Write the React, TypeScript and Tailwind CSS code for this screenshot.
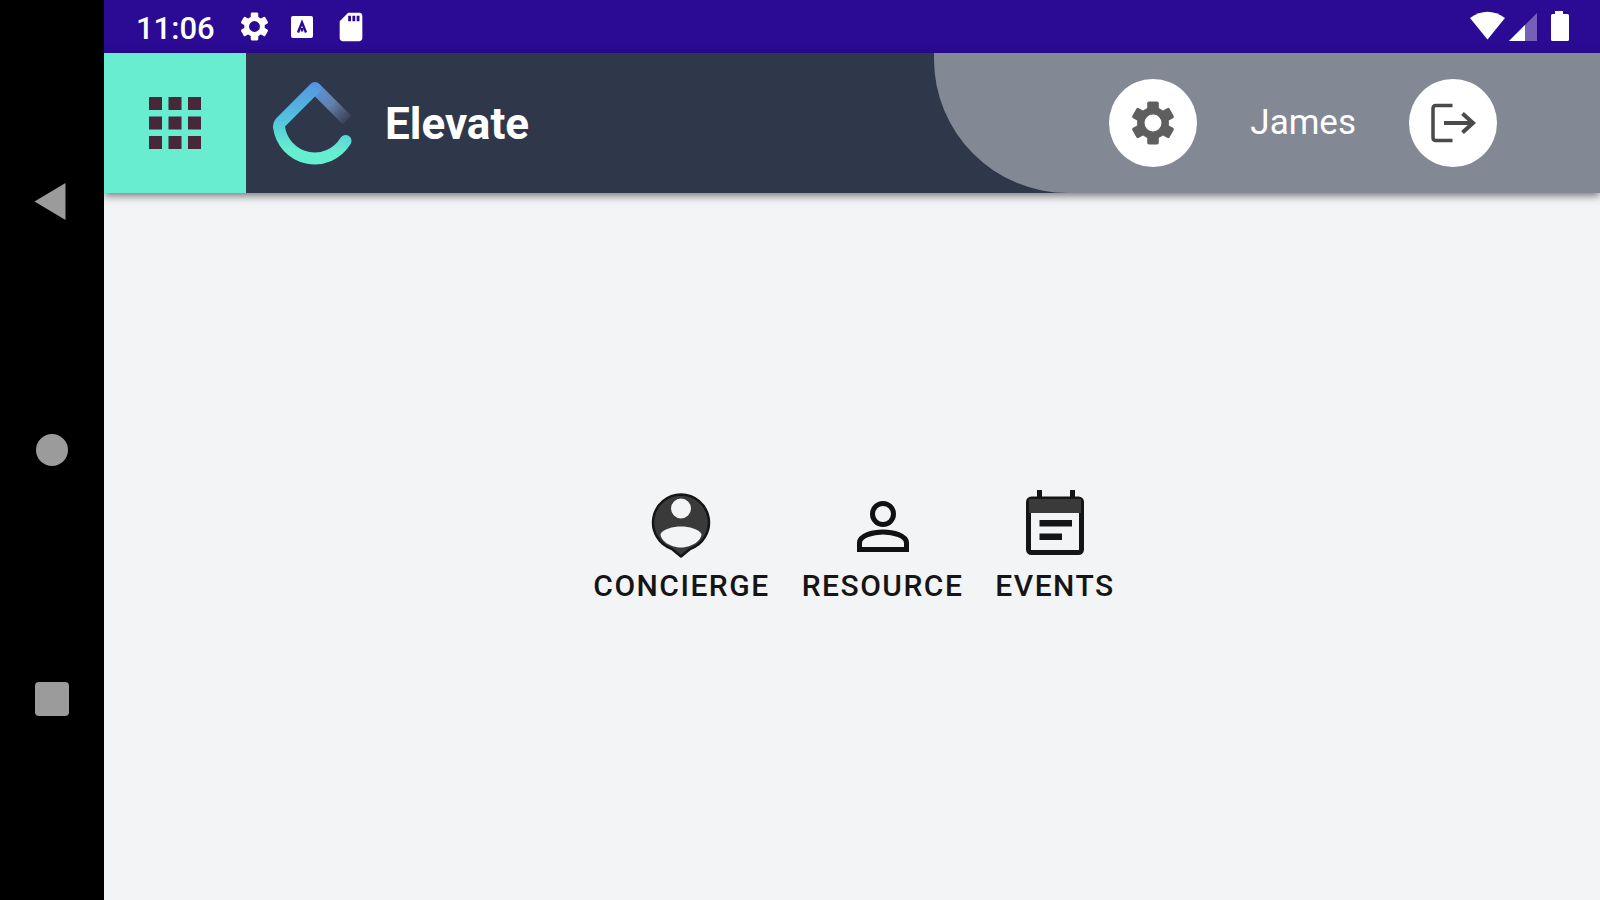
import type { ReactNode } from "react";
import { MdApps, MdSdCard } from "react-icons/md";

const GEAR_TEETH = [0, 60, 120, 180, 240, 300];

function GearIcon({ className }: { className: string }) {
  return (
    <svg viewBox="-24 -24 48 48" className={className} fill="currentColor">
      <circle r="12.200" fill="none" stroke="currentColor" strokeWidth="7.500" />
      {GEAR_TEETH.map((angle) => (
        <rect key={angle} x="-5.800" y="-21.500" width="11.600" height="9" rx="1.800" transform={`rotate(${angle})`} />
      ))}
    </svg>
  );
}

function NavRail() {
  return (
    <nav aria-label="System" className="flex w-[104px] shrink-0 flex-col items-center justify-around bg-black py-[76px]">
      <button type="button" aria-label="Back" className="flex size-10 items-center justify-center">
        <svg viewBox="0 0 40 40" className="size-10 fill-[#9b9b9b]">
          <path d="M2.500 20.500L33.500 2v37z" />
        </svg>
      </button>
      <button type="button" aria-label="Home" className="flex size-10 items-center justify-center">
        <span className="size-8 rounded-full bg-[#9b9b9b]" />
      </button>
      <button type="button" aria-label="Recent apps" className="flex size-10 items-center justify-center">
        <span className="size-[34px] rounded-sm bg-[#9b9b9b]" />
      </button>
    </nav>
  );
}

function StatusBar() {
  return (
    <div className="flex h-[53px] items-center justify-between bg-[#2b0a94] pr-[30px] pl-8 text-white">
      <div className="flex items-center">
        <time className="w-[103px] pt-1 text-[31px] leading-9 font-medium">11:06</time>
        <div className="flex items-center gap-[15px]">
          <GearIcon className="size-[31px]" />
          <svg viewBox="0 0 34 34" className="size-[34px]">
            <rect x="6" y="6" width="22" height="22" rx="2" fill="currentColor" />
            <path d="M13 22.500L17 12.500l4 10M17 18v3.500" fill="none" stroke="#2b0a94" strokeWidth="2.400" />
          </svg>
          <MdSdCard className="size-[34px]" />
        </div>
      </div>
      <svg viewBox="0 0 100 34" className="h-[34px] w-[100px] fill-white">
        <path d="M0 8Q17.500-4.500 35 8L17.500 29.500z" />
        <path d="M39 31L67 3v28z" opacity=".35" />
        <path d="M39 31L55 15v16z" />
        <path d="M85 1h8v3h4.500q1.500 0 1.500 1.500v24q0 1.500-1.500 1.500h-15q-1.500 0-1.500-1.500v-24q0-1.500 1.500-1.500H85z" />
      </svg>
    </div>
  );
}

function Logo() {
  return (
    <svg viewBox="0 0 90 90" className="size-[90px]" fill="none" strokeWidth="12" strokeLinejoin="round">
      <defs>
        <linearGradient id="drop" gradientUnits="userSpaceOnUse" x1="46" y1="6" x2="40" y2="84">
          <stop offset="0" stopColor="#5596e2" />
          <stop offset=".5" stopColor="#54c4dc" />
          <stop offset=".85" stopColor="#66eed0" />
        </linearGradient>
        <linearGradient id="fade" gradientUnits="userSpaceOnUse" x1="46" y1="9" x2="80" y2="43">
          <stop offset="0" stopColor="#5596e2" />
          <stop offset=".5" stopColor="#6f93c4" stopOpacity=".8" />
          <stop offset="1" stopColor="#7a86a4" stopOpacity=".1" />
        </linearGradient>
      </defs>
      <path d="M46 10L78 42" stroke="url(#fade)" />
      <path d="M46 10L12 44Q10 46 10 49A36 36 0 0 0 76.500 63" stroke="url(#drop)" strokeLinecap="round" />
    </svg>
  );
}

function Header() {
  return (
    <header className="relative flex h-[140px] items-stretch bg-[#2f374b] text-white shadow-[0_3px_8px_rgba(0,0,0,0.5)]">
      <button type="button" aria-label="Apps" className="flex w-[142px] items-center justify-center bg-[#68edd0] text-[#46283a]">
        <MdApps className="size-[78px]" />
      </button>
      <div className="flex items-center gap-[26px] pl-[23px]">
        <Logo />
        <h1 className="pt-0.5 text-[44px] leading-[52px] font-bold">Elevate</h1>
      </div>
      <div className="ml-auto flex items-center gap-[53px] rounded-bl-[134px] bg-[#838994] pr-[103px] pl-[175px]">
        <button type="button" aria-label="Settings" className="flex size-[88px] items-center justify-center rounded-full bg-white text-[#5f5f5f]">
          <GearIcon className="size-12" />
        </button>
        <span className="text-[35px] leading-10">James</span>
        <button type="button" aria-label="Log out" className="flex size-[88px] items-center justify-center rounded-full bg-white">
          <svg viewBox="0 0 88 88" className="size-[88px]" fill="none" stroke="#4a4a4a" strokeWidth="3.500">
            <path d="M43.500 26.500H27q-3 0-3 3v29q0 3 3 3h16.500" />
            <path d="M35 44h29M53.500 34.500L64 44L53.500 53.500" strokeWidth="4" />
          </svg>
        </button>
      </div>
    </header>
  );
}

function ConciergeIcon() {
  return (
    <svg viewBox="0 0 78 78" className="size-[78px]">
      <path
        fillRule="evenodd"
        fill="#3a3a3a"
        d="M39 8.500a28 28 0 0 1 9 54.500L39 70.500L30 63A28 28 0 0 1 39 8.500zM39 12.500a10 10 0 1 0 0 20 10 10 0 0 0 0-20zM18.500 48C18.500 55 29 61.500 39 61.500S59.500 55 59.500 48C57 43 47 40.500 39 40.500S21 43 18.500 48z"
      />
      <path
        fill="none"
        stroke="#151515"
        strokeWidth="2.500"
        strokeLinejoin="round"
        d="M39 8.500a28 28 0 0 1 9 54.500L39 70.500L30 63A28 28 0 0 1 39 8.500z"
      />
    </svg>
  );
}

function ResourceIcon() {
  return (
    <svg viewBox="0 0 78 78" className="size-[78px]" fill="none" stroke="#111" strokeWidth="5">
      <circle cx="39" cy="28" r="10.500" />
      <path d="M15.500 63.500V57C15.500 49.500 29 46 39 46s23.500 3.500 23.500 11v6.500z" />
    </svg>
  );
}

function EventsIcon() {
  return (
    <svg viewBox="0 0 78 78" className="size-[78px]">
      <rect x="12.500" y="13" width="53" height="53.500" rx="3" fill="none" stroke="#151515" strokeWidth="5" />
      <path d="M13 13h52v14H13z" fill="#3a3a3a" />
      <path d="M21 4h5v9h-5zM54 4h5v9h-5zM23.500 34H56v6.500H23.500zM23.500 47.500H46V54H23.500z" fill="#151515" />
    </svg>
  );
}

function Tile({ icon, label }: { icon: ReactNode; label: string }) {
  return (
    <button type="button" className="flex flex-col items-center text-[#151515]">
      {icon}
      <span className="text-[30px] leading-[44px] font-medium tracking-wider uppercase">{label}</span>
    </button>
  );
}

export default function App() {
  return (
    <div className="flex min-h-screen bg-[#f3f4f6] font-[Roboto,sans-serif]">
      <NavRail />
      <div className="flex min-w-0 grow flex-col">
        <StatusBar />
        <Header />
        <main className="flex grow items-center justify-center gap-8 pl-1">
          <Tile icon={<ConciergeIcon />} label="Concierge" />
          <Tile icon={<ResourceIcon />} label="Resource" />
          <Tile icon={<EventsIcon />} label="Events" />
        </main>
      </div>
    </div>
  );
}
